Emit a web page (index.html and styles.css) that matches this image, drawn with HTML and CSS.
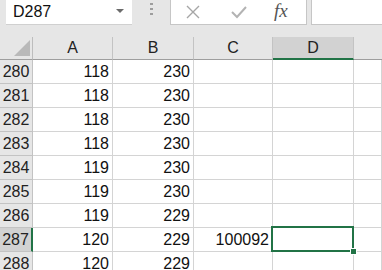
FILE: index.html
```html
<!DOCTYPE html>
<html lang="en">
  <head>
    <meta charset="UTF-8" />
    <title>Sheet</title>
    <link rel="stylesheet" href="styles.css">
  </head>
  <body>
    <div class="toolbar">
      <div class="name-box">
        <span>D287</span>
        <span class="caret"></span>
      </div>
      <div class="grip"><i></i><i></i><i></i></div>
      <div class="fx-buttons">
        <svg class="icon" width="16" height="14" viewBox="0 0 16 14">
          <path d="M2 1 L14 13 M14 1 L2 13" stroke="#a6a6a6" stroke-width="1.4" fill="none" />
        </svg>
        <svg class="icon" width="16" height="14" viewBox="0 0 16 14">
          <path d="M1 7 L6 12 L15 2" stroke="#b3b3b3" stroke-width="2" fill="none" />
        </svg>
        <span class="fx">fx</span>
      </div>
      <div class="formula"></div>
    </div>

    <div class="sheet">
      <div class="corner"><span class="tri"></span></div>
      <div class="col-head">A</div>
      <div class="col-head">B</div>
      <div class="col-head">C</div>
      <div class="col-head active">D</div>
      <div class="col-head rest"></div>

      <div class="row-head">280</div><div class="cell">118</div><div class="cell">230</div><div class="cell"></div><div class="cell"></div><div class="cell"></div>
      <div class="row-head">281</div><div class="cell">118</div><div class="cell">230</div><div class="cell"></div><div class="cell"></div><div class="cell"></div>
      <div class="row-head">282</div><div class="cell">118</div><div class="cell">230</div><div class="cell"></div><div class="cell"></div><div class="cell"></div>
      <div class="row-head">283</div><div class="cell">118</div><div class="cell">230</div><div class="cell"></div><div class="cell"></div><div class="cell"></div>
      <div class="row-head">284</div><div class="cell">119</div><div class="cell">230</div><div class="cell"></div><div class="cell"></div><div class="cell"></div>
      <div class="row-head">285</div><div class="cell">119</div><div class="cell">230</div><div class="cell"></div><div class="cell"></div><div class="cell"></div>
      <div class="row-head">286</div><div class="cell">119</div><div class="cell">229</div><div class="cell"></div><div class="cell"></div><div class="cell"></div>
      <div class="row-head active">287</div><div class="cell">120</div><div class="cell">229</div><div class="cell">100092</div><div class="cell selected"><span class="handle"></span></div><div class="cell"></div>
      <div class="row-head">288</div><div class="cell">120</div><div class="cell">229</div><div class="cell"></div><div class="cell"></div><div class="cell"></div>
    </div>
  </body>
</html>
```

FILE: styles.css
```css
body {
  margin: 0;
  background-color: #e6e6e6;
  font-family: "Liberation Sans", Arial, sans-serif;
  color: #111;
  overflow: hidden;
}

.toolbar {
  display: flex;
  align-items: stretch;
  height: 25px;
  margin-bottom: 12px;
}

.name-box {
  display: flex;
  align-items: center;
  justify-content: space-between;
  width: 126px;
  margin-left: 6px;
  padding-left: 7px;
  padding-right: 8px;
  background-color: white;
  border-bottom: 1px solid #d0d0d0;
  font-size: 16px;
  box-sizing: border-box;
}

.caret {
  width: 0;
  height: 0;
  border-left: 4px solid transparent;
  border-right: 4px solid transparent;
  border-top: 4px solid #6b6b6b;
  margin-bottom: 2px;
}

.grip {
  width: 38px;
  display: flex;
  flex-direction: column;
  align-items: center;
  gap: 3px;
  padding-top: 3px;
}

.grip i {
  display: block;
  width: 3px;
  height: 2px;
  background-color: #9d9d9d;
}

.fx-buttons {
  display: flex;
  align-items: center;
  width: 137px;
  padding-left: 14px;
  gap: 30px;
  background-color: white;
  border: 1px solid #c6c6c6;
  border-top: none;
  box-sizing: border-box;
}

.fx-buttons .icon {
  display: block;
}

.fx {
  font-family: "Liberation Serif", "Times New Roman", serif;
  font-style: italic;
  font-size: 19px;
  color: #555;
  margin-left: -3px;
  margin-top: -2px;
}

.formula {
  flex: 1;
  margin-left: 4px;
  background-color: white;
  border: 1px solid #c6c6c6;
  border-top: none;
  border-right: none;
}

.sheet {
  display: grid;
  grid-template-columns: 33px 80px 81px 79px 81px 1fr;
  grid-template-rows: 23px repeat(9, 24px);
  background-color: white;
}

.corner {
  position: relative;
  background-color: #e6e6e6;
  border-right: 1px solid #bdbdbd;
  border-bottom: 1px solid #9e9e9e;
}

.tri {
  position: absolute;
  right: 2px;
  bottom: 3px;
  width: 0;
  height: 0;
  border-left: 16px solid transparent;
  border-bottom: 16px solid #b9b9b9;
}

.col-head {
  display: flex;
  align-items: center;
  justify-content: center;
  background-color: #e6e6e6;
  border-right: 1px solid #c3c3c3;
  border-bottom: 1px solid #9e9e9e;
  font-size: 16px;
  color: #222;
}

.col-head.active {
  background-color: #d2d2d2;
  border-bottom: 2px solid #217346;
}

.col-head.rest {
  border-right: none;
}

.row-head {
  display: flex;
  align-items: center;
  justify-content: center;
  background-color: #e6e6e6;
  border-right: 1px solid #c3c3c3;
  border-bottom: 1px solid #c3c3c3;
  font-size: 16px;
  color: #222;
}

.row-head.active {
  background-color: #d2d2d2;
  border-right: 2px solid #217346;
}

.cell {
  position: relative;
  display: flex;
  align-items: center;
  justify-content: flex-end;
  padding-right: 3px;
  border-right: 1px solid #d4d4d4;
  border-bottom: 1px solid #d4d4d4;
  font-size: 16px;
}

.cell.selected {
  z-index: 1;
}

.cell.selected::before {
  content: "";
  position: absolute;
  left: -2px;
  top: -2px;
  right: -1px;
  bottom: -1px;
  border: 2px solid #217346;
}

.handle {
  position: absolute;
  right: -4px;
  bottom: -4px;
  width: 5px;
  height: 5px;
  background-color: #217346;
  border: 1px solid white;
}
```
